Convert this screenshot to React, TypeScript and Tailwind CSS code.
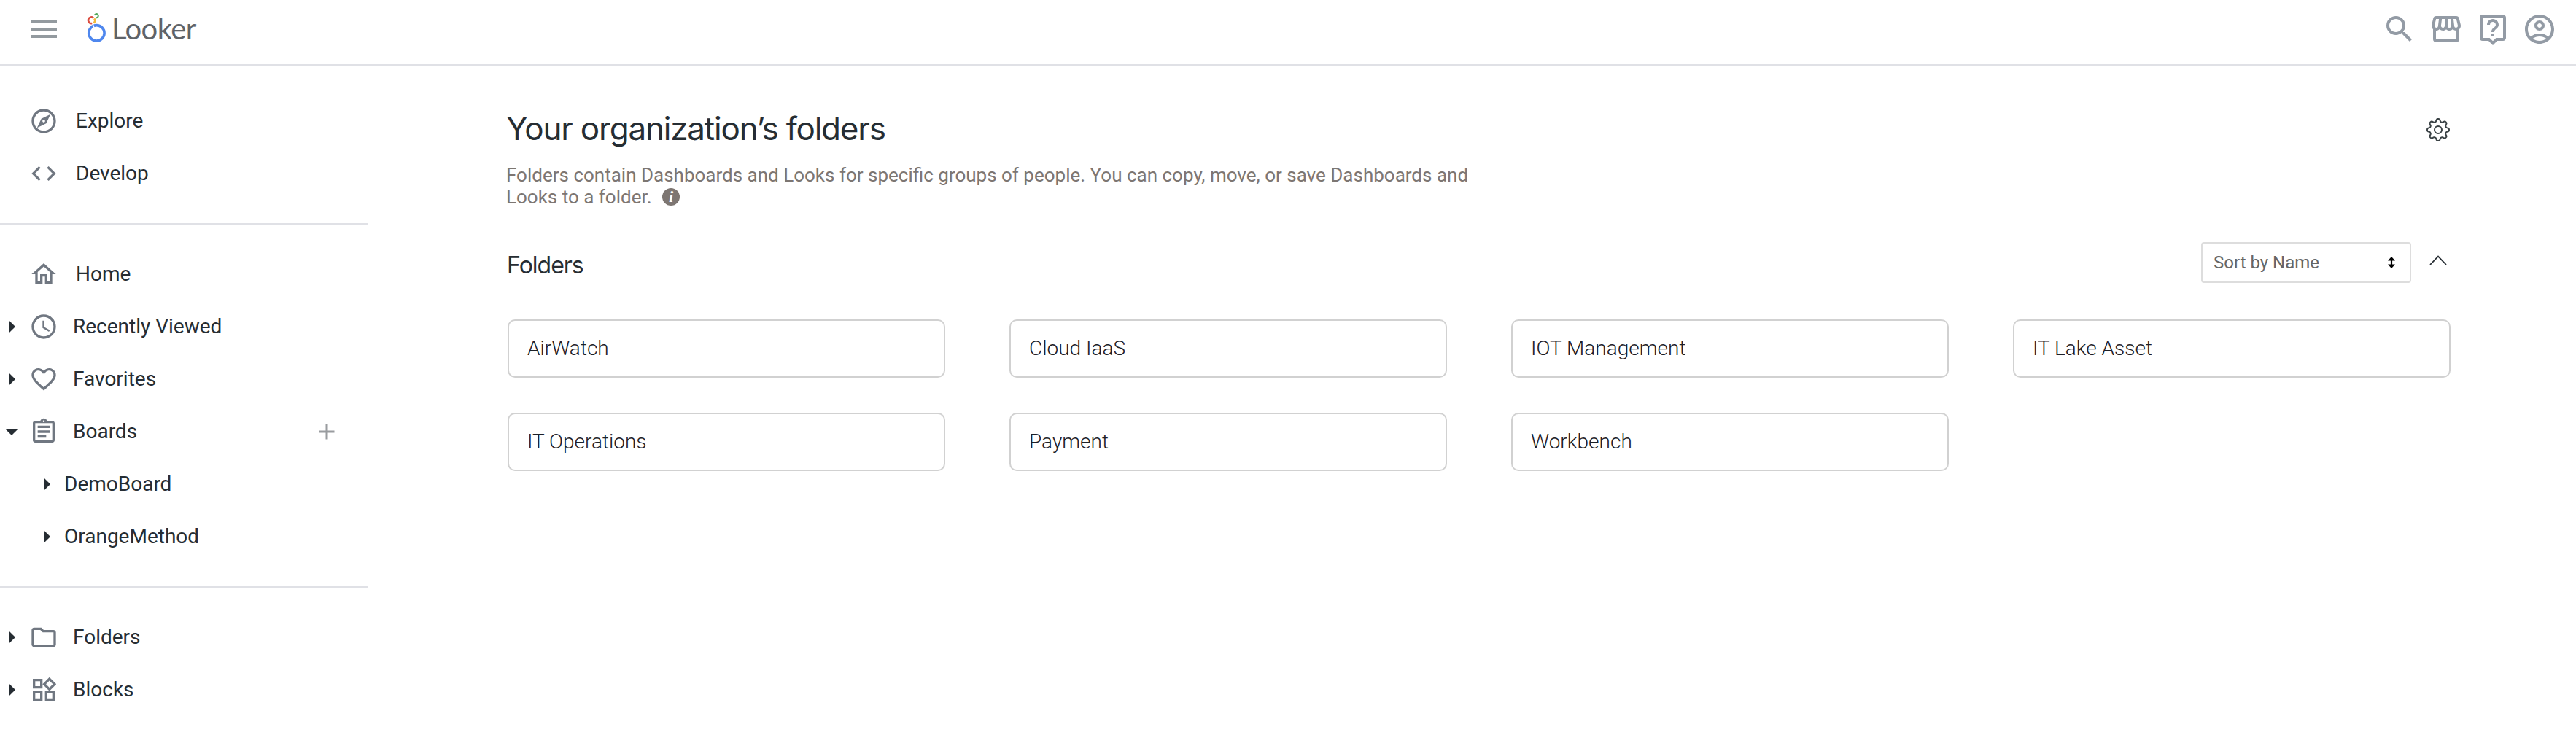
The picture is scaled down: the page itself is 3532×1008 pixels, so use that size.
import React from "react";
import {
  MdAccessTime,
  MdAdd,
  MdArrowDropDown,
  MdArrowRight,
  MdCode,
  MdFavoriteBorder,
  MdMenu,
  MdOutlineAccountCircle,
  MdOutlineAssignment,
  MdOutlineExplore,
  MdOutlineFolder,
  MdOutlineHome,
  MdOutlineLiveHelp,
  MdOutlineStorefront,
  MdOutlineWidgets,
  MdSearch,
} from "react-icons/md";

type Icon = React.ComponentType<{ className?: string }>;

function LookerMark() {
  return (
    <svg viewBox="120 19 26 42" className="h-[42px] w-[26px] shrink-0 overflow-visible" fill="none">
      <circle cx="132.4" cy="45.3" r="10.7" stroke="#4f87ee" strokeWidth="3.6" />
      <path d="M127 32.5L129.6 39.5" stroke="#fff" strokeWidth="1.3" />
      <path d="M128 24.5A4.3 4.3 0 1 0 126.2 32" stroke="#db4c3f" strokeWidth="2.7" />
      <path d="M129.2 25.4A4.6 4.6 0 0 1 128.6 31.6" stroke="#f2b93b" strokeWidth="2.7" />
      <path d="M129.8 20.8A2.55 2.55 0 1 1 131.2 24" stroke="#53a85b" strokeWidth="2" />
    </svg>
  );
}

function TopBar() {
  const actions: Icon[] = [MdSearch, MdOutlineStorefront, MdOutlineLiveHelp, MdOutlineAccountCircle];
  return (
    <header className="flex h-[90px] items-start justify-between border-b-2 border-[#e0e1e6] pt-4 pr-[26px] pl-9">
      <div className="flex h-12 items-center">
        <MdMenu className="size-12 text-[#939a9f]" />
        <div className="ml-9 flex items-center">
          <LookerMark />
          <span className="mb-[3px] ml-[7px] font-['Lato'] text-[40px] leading-[48px] tracking-[-0.6px] text-[#5f6368]">
            Looker
          </span>
        </div>
      </div>
      <div className="flex gap-4 text-[#939ba5]">
        {actions.map((A, i) => (
          <A key={i} className="size-12" />
        ))}
      </div>
    </header>
  );
}

function NavItem({ icon: I, label, state }: { icon: Icon; label: string; state?: "open" | "closed" }) {
  return (
    <div className="flex h-[72px] items-center">
      <div className="-ml-1 size-10">
        {state === "closed" && <MdArrowRight className="size-10 text-[#262d33]" />}
        {state === "open" && <MdArrowDropDown className="size-10 text-[#262d33]" />}
      </div>
      <I className="ml-1 size-10 shrink-0 text-[#707781]" />
      <span className={state ? "ml-5" : "ml-6"}>{label}</span>
      {state === "open" && <MdAdd className="mr-[38px] ml-auto size-9 text-[#999c9f]" />}
    </div>
  );
}

function SubItem({ label }: { label: string }) {
  return (
    <div className="flex h-[72px] items-center pl-11">
      <MdArrowRight className="size-10 text-[#262d33]" />
      <span className="ml-1">{label}</span>
    </div>
  );
}

function Sidebar() {
  return (
    <nav className="w-[504px] shrink-0 pt-2 text-[28px] leading-10 text-[#262d33]">
      <div className="border-b-2 border-[#e0e1e6] py-8">
        <NavItem icon={MdOutlineExplore} label="Explore" />
        <NavItem icon={MdCode} label="Develop" />
      </div>
      <div className="border-b-2 border-[#e0e1e6] py-8">
        <NavItem icon={MdOutlineHome} label="Home" />
        <NavItem icon={MdAccessTime} label="Recently Viewed" state="closed" />
        <NavItem icon={MdFavoriteBorder} label="Favorites" state="closed" />
        <NavItem icon={MdOutlineAssignment} label="Boards" state="open" />
        <SubItem label="DemoBoard" />
        <SubItem label="OrangeMethod" />
      </div>
      <div className="pt-8">
        <NavItem icon={MdOutlineFolder} label="Folders" state="closed" />
        <NavItem icon={MdOutlineWidgets} label="Blocks" state="closed" />
      </div>
    </nav>
  );
}

const gearPath = (() => {
  let d = "";
  for (let i = 0; i < 160; i++) {
    const a = (i / 160) * Math.PI * 2;
    const r = 13.2 + 1.9 * Math.tanh(1.7 * Math.cos(8 * a));
    d += `${i ? "L" : "M"}${(16 + r * Math.sin(a)).toFixed(2)} ${(16 - r * Math.cos(a)).toFixed(2)}`;
  }
  return d + "Z";
})();

function Gear() {
  return (
    <svg viewBox="0 0 32 32" className="size-8" fill="none" stroke="#3a4245" strokeWidth="2" strokeLinejoin="round">
      <path d={gearPath} />
      <circle cx="16" cy="16" r="5" />
    </svg>
  );
}

function InfoBadge() {
  return (
    <svg viewBox="0 0 24 24" className="ml-[14px] inline-block size-6 align-[-3px]">
      <circle cx="12" cy="12" r="12" fill="#7d7672" />
      <text
        x="12"
        y="19"
        textAnchor="middle"
        className="fill-white font-['Liberation_Serif',serif] text-[22px] font-bold italic"
      >
        i
      </text>
    </svg>
  );
}

const folders = ["AirWatch", "Cloud IaaS", "IOT Management", "IT Lake Asset", "IT Operations", "Payment", "Workbench"];

function Content() {
  return (
    <main className="ml-48 w-[2664px]">
      <div className="flex justify-between pt-[58px]">
        <h1 className="-ml-0.5 font-['Inter'] text-[44px] leading-[56px] tracking-[-1.2px] text-[#262d33]">
          Your organization’s folders
        </h1>
        <div className="mt-3.5 mr-px h-8">
          <Gear />
        </div>
      </div>
      <p className="mt-[21px] -ml-0.5 h-[60px] w-[1330px] text-[26px] leading-[30px] text-[#7d7672]">
        Folders contain Dashboards and Looks for specific groups of people. You can copy, move, or save Dashboards and
        Looks to a folder.
        <InfoBadge />
      </p>
      <div className="mt-[47px] flex h-14 items-start justify-between">
        <h2 className="mt-[12px] -ml-px font-['Inter'] text-[32px] leading-10 tracking-[-1px] text-[#262d33]">
          Folders
        </h2>
        <div className="flex items-start">
          <div className="flex h-14 w-72 items-center justify-between rounded border-2 border-[#dddddd] pr-5 pl-[15px] text-2xl text-[#666666]">
            <span>Sort by Name</span>
            <svg viewBox="0 0 10 16" className="h-4 w-[10px]" fill="#000">
              <path d="M5 0l5 5.5H6.1v5H10L5 16 0 10.5h3.9v-5H0z" />
            </svg>
          </div>
          <svg
            viewBox="0 0 24 14"
            className="mt-[18px] mr-[5px] ml-[25px] h-[14px] w-6"
            fill="none"
            stroke="#262d33"
            strokeWidth="1.8"
          >
            <path d="M1 13L12 1.6L23 13" />
          </svg>
        </div>
      </div>
      <div className="mt-[50px] grid grid-cols-4 gap-x-[88px] gap-y-12">
        {folders.map((f) => (
          <div
            key={f}
            className="flex h-20 items-center rounded-[10px] border-2 border-[#d1d1d1] pl-[25px] text-[28px] font-light text-[#1c2027]"
          >
            {f}
          </div>
        ))}
      </div>
    </main>
  );
}

export default function App() {
  return (
    <div className="h-[1008px] w-[3532px] overflow-hidden bg-white font-['Roboto',sans-serif]">
      <TopBar />
      <div className="flex">
        <Sidebar />
        <Content />
      </div>
    </div>
  );
}
